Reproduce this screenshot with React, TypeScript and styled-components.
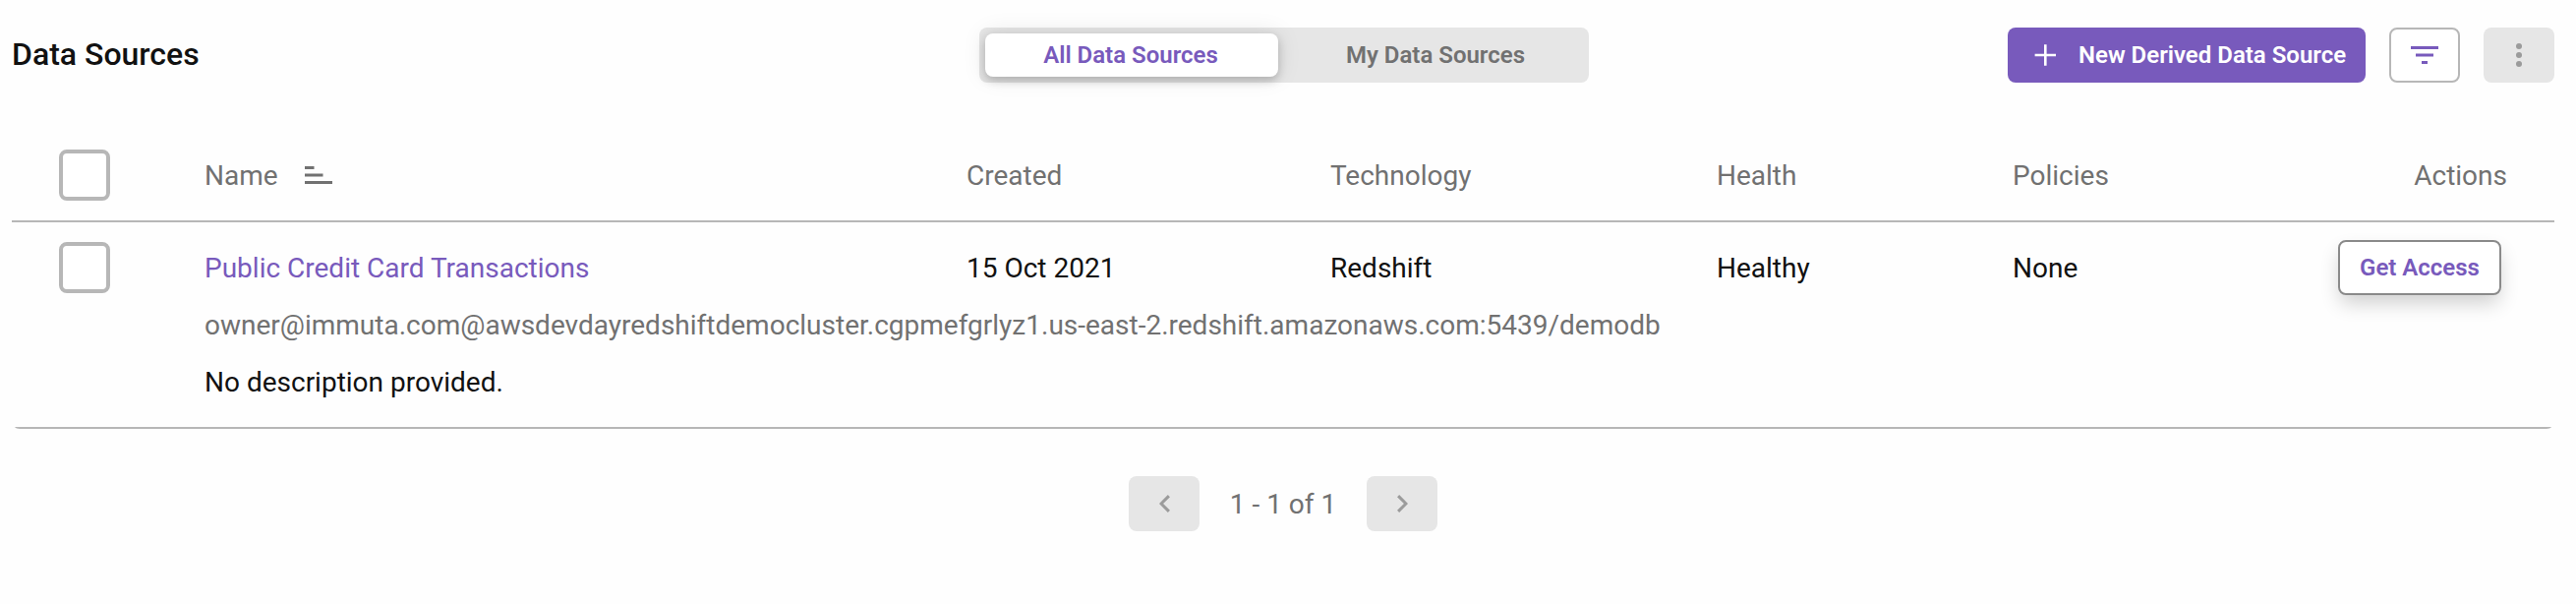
import { memo } from 'react';
import styled, { createGlobalStyle, css } from 'styled-components';

type TDataSource = {
  name: string;
  created: string;
  technology: string;
  health: string;
  policies: string;
  connection: string;
  description: string;
};

const colors = {
  primary: '#785abc',
  text: '#111111',
  gray: '#717171',
  line: '#b7b7b7',
  disabled: '#e6e6e6',
  disabledIcon: '#9b9b9b'
};

const dataSources: TDataSource[] = [
  {
    name: 'Public Credit Card Transactions',
    created: '15 Oct 2021',
    technology: 'Redshift',
    health: 'Healthy',
    policies: 'None',
    connection:
      'owner@immuta.com@awsdevdayredshiftdemocluster.cgpmefgrlyz1.us-east-2.redshift.amazonaws.com:5439/demodb',
    description: 'No description provided.'
  }
];

const PlusIcon = () => (
  <svg width="22" height="22" viewBox="0 0 22 22" fill="none" stroke="currentColor" strokeWidth="2.6">
    <path d="M11.3 .3v21.4M.6 11h21.4" />
  </svg>
);

const FilterIcon = () => (
  <svg width="28" height="18" viewBox="0 0 28 18" fill="currentColor">
    <path d="M0 0h28v3H0zM5 7.5h18v3H5zM11 15h6v3h-6z" />
  </svg>
);

const SortIcon = () => (
  <svg width="28" height="18" viewBox="0 0 28 18" fill="currentColor">
    <path d="M0 0h9.5v3H0zM0 7.5h18.5v3H0zM0 15h28v3H0z" />
  </svg>
);

const MoreIcon = () => (
  <svg width="6" height="24" viewBox="0 0 6 24" fill="currentColor">
    <circle cx="3" cy="3" r="3" />
    <circle cx="3" cy="12" r="3" />
    <circle cx="3" cy="21" r="3" />
  </svg>
);

const ChevronIcon = ({ direction }: { direction: 'left' | 'right' }) => (
  <svg width="11" height="18" viewBox="0 0 11 18" fill="none" stroke="currentColor" strokeWidth="3">
    <path d={direction === 'left' ? 'M9.9 1.1L2 9l7.9 7.9' : 'M1.1 1.1L9 9l-7.9 7.9'} />
  </svg>
);

const SourceRow = memo(({ source }: { source: TDataSource }) => (
  <Row>
    <Checkbox type="checkbox" aria-label={source.name} />
    <NameLink href="#">{source.name}</NameLink>
    <span>{source.created}</span>
    <span>{source.technology}</span>
    <span>{source.health}</span>
    <span>{source.policies}</span>
    <AccessButton>Get Access</AccessButton>
    <Detail $muted>{source.connection}</Detail>
    <Detail>{source.description}</Detail>
  </Row>
));

export default function App() {
  return (
    <Page>
      <GlobalStyle />
      <Toolbar>
        <Title>Data Sources</Title>
        <Tabs>
          <Tab $active>All Data Sources</Tab>
          <Tab>My Data Sources</Tab>
        </Tabs>
        <ToolbarActions>
          <NewButton>
            <PlusIcon />
            New Derived Data Source
          </NewButton>
          <IconButton $outlined aria-label="Filter">
            <FilterIcon />
          </IconButton>
          <IconButton disabled aria-label="More">
            <MoreIcon />
          </IconButton>
        </ToolbarActions>
      </Toolbar>

      <Table>
        <HeaderRow>
          <Checkbox type="checkbox" aria-label="Select all" />
          <SortableHeader>
            Name
            <SortIcon />
          </SortableHeader>
          <span>Created</span>
          <span>Technology</span>
          <span>Health</span>
          <span>Policies</span>
          <span>Actions</span>
        </HeaderRow>
        {dataSources.map(source => (
          <SourceRow key={source.name} source={source} />
        ))}
      </Table>

      <Pagination>
        <IconButton disabled aria-label="Previous page">
          <ChevronIcon direction="left" />
        </IconButton>
        <PageRange>1 - 1 of 1</PageRange>
        <IconButton disabled aria-label="Next page">
          <ChevronIcon direction="right" />
        </IconButton>
      </Pagination>
    </Page>
  );
}

const GlobalStyle = createGlobalStyle`
  * {
    box-sizing: border-box;
  }

  body {
    margin: 0;
    background-color: #fefefe;
    color: ${colors.text};
    font-family: Roboto, 'Liberation Sans', sans-serif;
    font-size: 28px;
  }
`;

const Page = styled.main`
  width: 2620px;
  height: 614px;
  padding: 28px 22px 0 12px;
  overflow: hidden;
`;

const Toolbar = styled.header`
  height: 56px;
  display: grid;
  grid-template-columns: 984px 620px 1fr;
  align-items: center;
`;

const Title = styled.h1`
  margin: 0;
  padding-bottom: 2px;
  font-size: 32px;
  font-weight: 500;
  line-height: 38px;
`;

const buttonReset = css`
  margin: 0;
  padding: 0;
  border: 0;
  border-radius: 8px;
  font-family: inherit;
  font-size: 24px;
  font-weight: 600;
  cursor: pointer;
`;

const Tabs = styled.div`
  height: 56px;
  padding: 6px;
  border-radius: 8px;
  background-color: ${colors.disabled};
  display: flex;
  gap: 12px;
`;

const Tab = styled.button<{ $active?: boolean }>`
  ${buttonReset}
  width: 298px;
  padding-right: 2px;
  color: ${({ $active }) => ($active ? colors.primary : colors.gray)};
  background-color: ${({ $active }) => ($active ? '#ffffff' : 'transparent')};
  box-shadow: ${({ $active }) =>
    $active ? '0 4px 10px rgba(0, 0, 0, 0.2), 0 0 24px rgba(0, 0, 0, 0.1)' : 'none'};
`;

const ToolbarActions = styled.div`
  display: flex;
  justify-content: flex-end;
  gap: 24px;
`;

const NewButton = styled.button`
  ${buttonReset}
  width: 364px;
  height: 56px;
  padding-left: 27px;
  display: flex;
  align-items: center;
  gap: 23px;
  color: #ffffff;
  background-color: ${colors.primary};
  white-space: nowrap;
`;

const IconButton = styled.button<{ $outlined?: boolean }>`
  ${buttonReset}
  width: 72px;
  height: 56px;
  display: flex;
  align-items: center;
  justify-content: center;
  color: ${colors.primary};
  background-color: #ffffff;
  border: ${({ $outlined }) => ($outlined ? `2px solid ${colors.line}` : '0')};

  &:disabled {
    color: ${colors.disabledIcon};
    background-color: ${colors.disabled};
    cursor: default;
  }
`;

const Table = styled.section`
  margin-top: 50px;
  border-radius: 8px;
  overflow: hidden;
`;

const tableGrid = css`
  display: grid;
  grid-template-columns: 148px 775px 370px 393px 301px 1fr auto;
  align-content: start;
  align-items: start;
  row-gap: 1px;
  border-bottom: 2px solid ${colors.line};
  line-height: 57px;
`;

const HeaderRow = styled.div`
  ${tableGrid}
  height: 92px;
  padding: 16px 48px 0;
  color: ${colors.gray};
`;

const SortableHeader = styled.span`
  display: flex;
  align-items: center;
  gap: 27px;

  svg {
    margin-bottom: 1px;
  }
`;

const Row = styled.div`
  ${tableGrid}
  height: 210px;
  padding: 18px 54px 0 48px;
`;

const Checkbox = styled.input`
  appearance: none;
  width: 52px;
  height: 52px;
  margin: 2px 0 0;
  border: 4px solid ${colors.line};
  border-radius: 8px;
  background-color: #ffffff;
`;

const NameLink = styled.a`
  color: ${colors.primary};
  text-decoration: none;
`;

const AccessButton = styled.button`
  ${buttonReset}
  width: 166px;
  height: 56px;
  border: 2px solid #8a8a8a;
  background-color: #ffffff;
  color: ${colors.primary};
  box-shadow: 0 10px 20px -2px rgba(0, 0, 0, 0.19);
`;

const Detail = styled.div<{ $muted?: boolean }>`
  grid-column: 2 / -1;
  color: ${({ $muted }) => ($muted ? colors.gray : colors.text)};
`;

const Pagination = styled.nav`
  margin-top: 48px;
  display: flex;
  align-items: center;
  justify-content: center;
`;

const PageRange = styled.span`
  width: 170px;
  padding-top: 1px;
  line-height: 33px;
  text-align: center;
  color: ${colors.gray};
`;
